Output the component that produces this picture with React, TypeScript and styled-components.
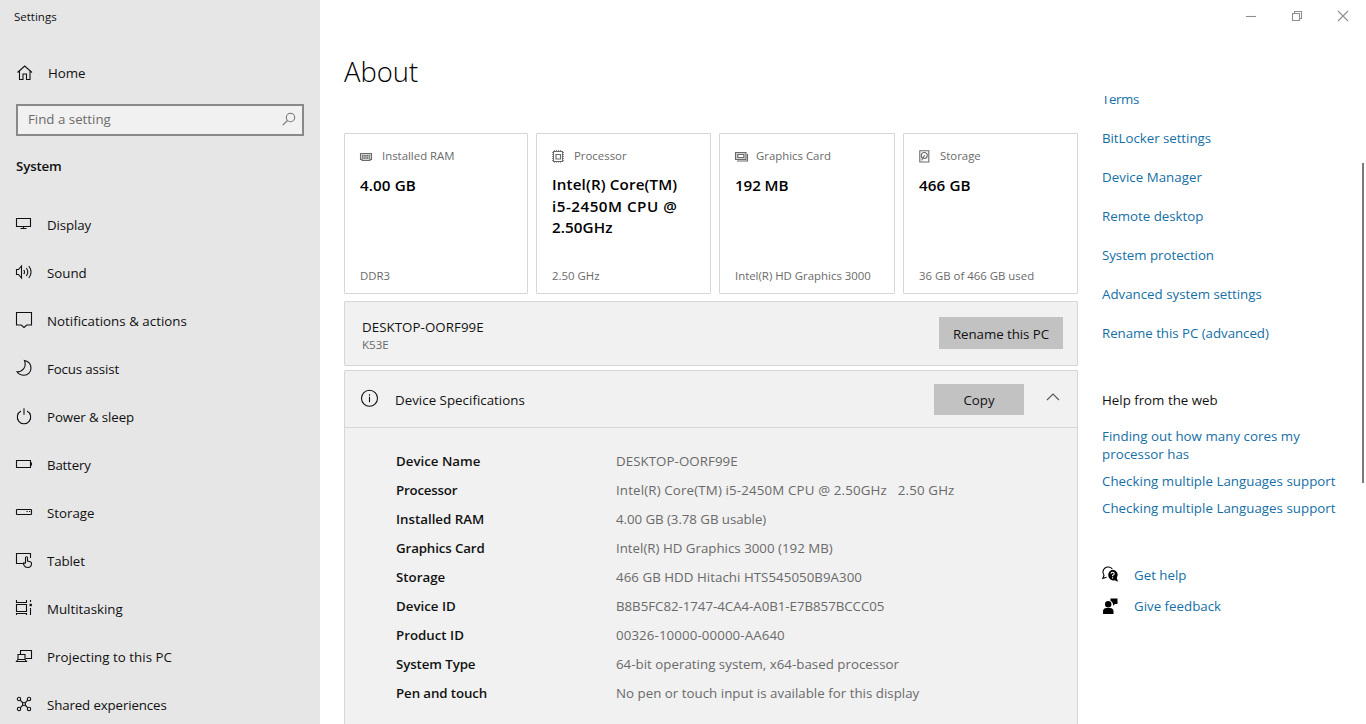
import React from "react";
import styled, { createGlobalStyle } from "styled-components";

const Global = createGlobalStyle`
  * { box-sizing: border-box; }
  html, body { margin: 0; padding: 0; overflow: hidden; background: #fff; }
  body { font-family: "Open Sans", "Noto Sans", sans-serif; font-size: 13.3px; line-height: 18px; color: #111; }
  svg { display: block; flex: none; overflow: visible; }
`;

const Window = styled.div`
  display: flex;
  width: 1366px;
  height: 724px;
  overflow: hidden;
  background: #fff;
`;

const Spaced = styled.span<{ $ls?: number }>`
  letter-spacing: ${(p) => p.$ls ?? 0}px;
  white-space: pre;
`;

const Sidebar = styled.aside`
  flex: none;
  width: 320px;
  height: 724px;
  background: #e6e6e6;
  display: flex;
  flex-direction: column;
  overflow: hidden;
`;

const WindowTitle = styled.div`
  flex: none;
  height: 32px;
  padding: 8px 0 0 14px;
  font-size: 11.5px;
  line-height: 17px;
`;

const HomeRow = styled.a`
  flex: none;
  display: flex;
  align-items: center;
  height: 48px;
  margin-top: 17px;
  padding-left: 16px;
  gap: 14px;
`;

const SearchBox = styled.div`
  flex: none;
  display: flex;
  align-items: center;
  justify-content: space-between;
  height: 32px;
  margin: 7px 16px 0;
  padding: 0 6px 2px 10px;
  border: 2px solid #898989;
  background: #f1f1f1;
  color: #6c6c6c;
`;

const SectionTitle = styled.h2`
  flex: none;
  margin: 21px 0 0 16px;
  font-size: 13.3px;
  line-height: 18px;
  font-weight: 600;
`;

const Nav = styled.nav`
  flex: none;
  display: flex;
  flex-direction: column;
  margin-top: 26px;
`;

const NavItem = styled.a`
  flex: none;
  display: flex;
  align-items: center;
  height: 48px;
  padding-left: 16px;
  gap: 13px;
  svg { margin-bottom: 2px; }
`;

const Page = styled.div`
  flex: 1;
  display: flex;
  flex-direction: column;
  height: 724px;
`;

const TitleBar = styled.div`
  flex: none;
  display: flex;
  justify-content: flex-end;
  height: 32px;
`;

const CaptionButton = styled.div`
  display: flex;
  align-items: center;
  justify-content: center;
  width: 46px;
  height: 32px;
  padding: 1px 0 0 1px;
  color: #8f8f8f;
`;

const Heading = styled.h1`
  flex: none;
  height: 64px;
  margin: 0;
  padding: 22px 0 0 24px;
  font-size: 27.4px;
  line-height: 36px;
  font-weight: 300;
  color: #000;
`;

const Body = styled.div`
  display: flex;
  flex: 1;
  min-height: 0;
  overflow: hidden;
`;

const Content = styled.main`
  flex: none;
  width: 734px;
  margin-left: 24px;
  padding-top: 37px;
`;

const Cards = styled.div`
  display: grid;
  grid-template-columns: 184px 175px 176px 175px;
  gap: 8px;
`;

const Card = styled.section`
  display: flex;
  flex-direction: column;
  height: 161px;
  padding: 14px 15px 8px;
  border: 1px solid #d6d6d6;
  border-radius: 1px;
`;

const CardLabel = styled.div<{ $gap?: number }>`
  display: flex;
  align-items: center;
  height: 16px;
  gap: ${(p) => p.$gap ?? 7}px;
  font-size: 11.4px;
  color: #6a6a6a;
`;

const CardValue = styled.div<{ $multi?: boolean }>`
  display: flex;
  flex-direction: column;
  margin-top: ${(p) => (p.$multi ? 10 : 11)}px;
  font-size: 15.2px;
  line-height: 21.5px;
  font-weight: 600;
  color: #000;
`;

const CardFoot = styled.div`
  margin-top: auto;
  font-size: 11.4px;
  line-height: 18px;
  color: #6a6a6a;
`;

const PcPanel = styled.section`
  display: flex;
  justify-content: space-between;
  height: 65px;
  margin-top: 7px;
  padding: 15px 14px 0 17px;
  border: 1px solid #d6d6d6;
  border-radius: 1px;
  background: #f1f1f1;
`;

const PcName = styled.div`
  padding-top: 1px;
  color: #111;
`;

const PcModel = styled.div`
  font-size: 11.6px;
  line-height: 17px;
  color: #6a6a6a;
`;

const Button = styled.button<{ $w: number; $h: number }>`
  width: ${(p) => p.$w}px;
  height: ${(p) => p.$h}px;
  padding: 2px 0 0;
  border: 0;
  background: #c2c2c2;
  font: inherit;
  color: #111;
  text-align: center;
`;

const Expander = styled.section`
  margin-top: 4px;
  height: 380px;
  border: 1px solid #d6d6d6;
  border-radius: 1px;
  background: #f1f1f1;
`;

const ExpanderHead = styled.div`
  display: flex;
  align-items: center;
  height: 57px;
  padding: 0 17px 0 16px;
  border-bottom: 1px solid #d6d6d6;
`;

const ExpanderTitle = styled.div`
  flex: 1;
  margin-left: 16px;
  padding-top: 2px;
`;

const Chevron = styled.div`
  margin: 0 0 4px 22px;
`;

const InfoMark = styled.div`
  padding-bottom: 2px;
`;

const SpecList = styled.dl`
  display: grid;
  grid-template-columns: 220px 1fr;
  grid-auto-rows: 29px;
  align-items: center;
  margin: 0;
  padding: 18px 0 0 51px;
  dt { font-weight: 600; }
  dd { margin: 0; color: #6a6a6a; }
`;

const Side = styled.aside`
  flex: none;
  width: 260px;
  margin-left: 24px;
  display: flex;
  flex-direction: column;
`;

const LinkColumn = styled.div`
  display: flex;
  flex-direction: column;
  margin-top: -17px;
`;

const Link = styled.a<{ $h?: number }>`
  display: flex;
  align-items: center;
  height: ${(p) => p.$h ?? 39}px;
  color: #156fa6;
`;

const SideTitle = styled.div`
  margin-top: 39px;
  color: #111;
`;

const WebLinks = styled.div`
  display: flex;
  flex-direction: column;
  gap: 9px;
  margin-top: 18px;
`;

const Support = styled.div`
  display: flex;
  flex-direction: column;
  margin-top: 42px;
`;

const SupportRow = styled.div`
  display: flex;
  align-items: center;
  height: 31px;
  gap: 14px;
`;

const ScrollThumb = styled.div`
  width: 2px;
  height: 320px;
  margin: 67px 2px 0 auto;
  background: #7a7a7a;
`;

type G = { children: React.ReactNode; size?: number; color?: string };
const Glyph = ({ children, size = 18, color = "#111" }: G) => (
  <svg width={size} height={size} viewBox={`0 0 ${size} ${size}`} fill="none" stroke={color} strokeWidth="1.1">
    {children}
  </svg>
);

const nav: { label: string; ls?: number; icon: React.ReactNode }[] = [
  { label: "Display", ls: -0.1, icon: <><path d="M.5 3.500h14v8H.5z" /><path d="M7.500 11.500v2M4.500 13.500h6" /></> },
  { label: "Sound", icon: <><path d="M.5 6.500h2L5.500 3v12L2.500 11.500H.5z" /><path d="M7.800 7q1.600 2 0 4M10.300 5q3 4 0 8M12.800 3q4.600 6 0 12" /></> },
  { label: "Notifications & actions", ls: 0.03, icon: <path d="M.5 1.500h15v12.500h-4.700L8 16.500 5.200 14H.5z" /> },
  { label: "Focus assist", ls: -0.14, icon: <path d="M8.500 1.500C13 2.500 15 5.500 15 9c0 4-3 7.200-7 7.200-3 0-5.500-1.300-7-3.500 5 .3 10-4.200 7.500-11.200z" /> },
  { label: "Power & sleep", ls: -0.12, icon: <><path d="M5 4.100a6.700 6.700 0 1 0 6 0" /><path d="M8 1.300v6.500" /></> },
  { label: "Battery", ls: -0.2, icon: <><path d="M.5 5.500h14v7H.5z" /><path d="M15.500 7.500v3" /></> },
  { label: "Storage", icon: <><rect x=".5" y="6.500" width="15" height="5" rx=".6" /><path d="M10.500 8.500h1.200M13 8.500h1.200" /></> },
  { label: "Tablet", ls: -0.1, icon: <><path d="M7 12.500H.5v-10h14v4.500" /><path d="M9.500 12V6.800q0-1.100 1-1.100t1 1.100V10l2.700.8q1.300.4 1.300 1.700 0 3.800-3.700 4-2.800 0-3.800-2.200L7.200 12.200q.8-1.200 2.300.8" /></> },
  { label: "Multitasking", icon: <><path d="M.5 1v2.500h10V1M.5 5.500h10v7H.5zM.5 16v-1.500h10V16M14.500 1v2M14.500 9v7" /><path d="M13.500 6h2.400" strokeWidth="2.400" /></> },
  { label: "Projecting to this PC", ls: 0.04, icon: <><path d="M4.500 7V3.500h11v8h-6" /><path d="M2 7.500h7v5H2zM.5 14.500h10L9 12.500H2z" /></> },
  { label: "Shared experiences", ls: -0.13, icon: <><circle cx="3" cy="4" r="1.700" /><circle cx="13" cy="4" r="1.700" /><circle cx="3" cy="14" r="1.700" /><circle cx="13" cy="14" r="1.700" /><circle cx="8" cy="9" r="1.500" /><path d="M4.200 5.200 7 8M11.800 5.200 9 8M4.200 12.800 7 10M11.800 12.800 9 10" /></> },
];

const grey = "#6a6a6a";
type CardData = { label: string; gap?: number; lines: [string, number][]; foot: string; icon: React.ReactNode };
const cards: CardData[] = [
  { label: "Installed RAM", lines: [["4.00 GB", 0.1]], foot: "DDR3", icon: <><path d="M.5 4.500h11v6h-1.500v1h-8v-1H.5z" fill="#d4d4d4" /><path d="M2 6.800h8M2 9h8" strokeDasharray="1.600 .6" strokeWidth="1.500" /></> },
  { label: "Processor", lines: [["Intel(R) Core(TM)", 0.14], ["i5-2450M CPU @", 0.5], ["2.50GHz", 0.1]], foot: "2.50 GHz", icon: <><path d="M1.500 2.500h9v10h-9zM4 5.500h4.500v4.500H4z" /><path d="M.5 3v9M11.500 3v9M2 1.500h8M2 13.200h8" strokeDasharray="1 1" strokeWidth=".8" /></> },
  { label: "Graphics Card", gap: 6, lines: [["192 MB", -0.1]], foot: "Intel(R) HD Graphics 3000", icon: <><path d="M.5 3.500h10.500v7H.5z" fill="#d4d4d4" /><path d="M2.800 5.500h6v3h-6z" fill="#fff" /><path d="M2 12h10.500V5" /></> },
  { label: "Storage", gap: 6, lines: [["466 GB", 0.12]], foot: "36 GB of 466 GB used", icon: <><path d="M.8 1.800h9v11.200h-9z" /><circle cx="5.300" cy="6.500" r="3" /><path d="M5.500 6.500 3 10.500v1M5.500 6.500h.5" /></> },
];

const specs: [string, string, number?, number?][] = [
  ["Device Name", "DESKTOP-OORF99E", 0, 0.06],
  ["Processor", "Intel(R) Core(TM) i5-2450M CPU @ 2.50GHz   2.50 GHz", -0.2, 0.155],
  ["Installed RAM", "4.00 GB (3.78 GB usable)", 0, -0.06],
  ["Graphics Card", "Intel(R) HD Graphics 3000 (192 MB)", -0.13],
  ["Storage", "466 GB HDD Hitachi HTS545050B9A300", 0, 0.04],
  ["Device ID", "B8B5FC82-1747-4CA4-A0B1-E7B857BCCC05", 0, -0.04],
  ["Product ID", "00326-10000-00000-AA640", 0, 0.1],
  ["System Type", "64-bit operating system, x64-based processor", -0.1, 0.02],
  ["Pen and touch", "No pen or touch input is available for this display", -0.1, 0.02],
];

const links: [string, number?][] = [
  ["Terms", -0.4],
  ["BitLocker settings", -0.04],
  ["Device Manager", 0.04],
  ["Remote desktop"],
  ["System protection", -0.04],
  ["Advanced system settings"],
  ["Rename this PC (advanced)", -0.04],
];

export default function App() {
  return (
    <Window>
      <Global />
      <Sidebar>
        <WindowTitle>Settings</WindowTitle>
        <HomeRow>
          <Glyph><path d="M1.500 8.500 8.700 2l7.300 6.500M3.500 7v8.500h3.500V10h3.500v5.500H14V7" /></Glyph>
          <Spaced>Home</Spaced>
        </HomeRow>
        <SearchBox>
          <Spaced>Find a setting</Spaced>
          <Glyph size={14} color="#777"><circle cx="8.500" cy="5.500" r="4.200" /><path d="M5.500 8.500.8 13.200" /></Glyph>
        </SearchBox>
        <SectionTitle><Spaced $ls={-0.15}>System</Spaced></SectionTitle>
        <Nav>
          {nav.map((n) => (
            <NavItem key={n.label}>
              <Glyph>{n.icon}</Glyph>
              <Spaced $ls={n.ls}>{n.label}</Spaced>
            </NavItem>
          ))}
        </Nav>
      </Sidebar>
      <Page>
        <TitleBar>
          <CaptionButton><Glyph size={11} color="currentColor"><path d="M0 5.500h10" /></Glyph></CaptionButton>
          <CaptionButton><Glyph size={11} color="currentColor"><path d="M.5 2.500h7v7h-7zM2.500 2.500v-2h7v7h-2" /></Glyph></CaptionButton>
          <CaptionButton><Glyph size={11} color="currentColor"><path d="m0 0 10 10M10 0 0 10" /></Glyph></CaptionButton>
        </TitleBar>
        <Heading>About</Heading>
        <Body>
          <Content>
            <Cards>
              {cards.map((c) => (
                <Card key={c.label}>
                  <CardLabel $gap={c.gap}><Glyph size={15} color={grey}>{c.icon}</Glyph><Spaced>{c.label}</Spaced></CardLabel>
                  <CardValue $multi={c.lines.length > 1}>
                    {c.lines.map(([text, ls]) => <Spaced key={text} $ls={ls}>{text}</Spaced>)}
                  </CardValue>
                  <CardFoot><Spaced>{c.foot}</Spaced></CardFoot>
                </Card>
              ))}
            </Cards>
            <PcPanel>
              <div>
                <PcName><Spaced $ls={0.06}>DESKTOP-OORF99E</Spaced></PcName>
                <PcModel>K53E</PcModel>
              </div>
              <Button $w={124} $h={32}><Spaced $ls={-0.05}>Rename this PC</Spaced></Button>
            </PcPanel>
            <Expander>
              <ExpanderHead>
                <InfoMark>
                  <Glyph color="#111"><circle cx="8.500" cy="9.300" r="8" /><path d="M8.500 7.800v5.500M8.500 5.300v1.400" /></Glyph>
                </InfoMark>
                <ExpanderTitle><Spaced $ls={0.03}>Device Specifications</Spaced></ExpanderTitle>
                <Button $w={90} $h={31}>Copy</Button>
                <Chevron><Glyph size={14} color="#555"><path d="m1 10 6-6 6 6" /></Glyph></Chevron>
              </ExpanderHead>
              <SpecList>
                {specs.map(([k, v, kls, vls]) => (
                  <React.Fragment key={k}>
                    <dt><Spaced $ls={kls}>{k}</Spaced></dt>
                    <dd><Spaced $ls={vls}>{v}</Spaced></dd>
                  </React.Fragment>
                ))}
              </SpecList>
            </Expander>
          </Content>
          <Side>
            <LinkColumn>
              {links.map(([l, ls]) => <Link key={l}><Spaced $ls={ls}>{l}</Spaced></Link>)}
            </LinkColumn>
            <SideTitle>Help from the web</SideTitle>
            <WebLinks>
              <Link $h={36}><Spaced $ls={0.03}>{"Finding out how many cores my\nprocessor has"}</Spaced></Link>
              <Link $h={18}><Spaced $ls={0.03}>Checking multiple Languages support</Spaced></Link>
              <Link $h={18}><Spaced $ls={0.03}>Checking multiple Languages support</Spaced></Link>
            </WebLinks>
            <Support>
              <SupportRow>
                <Glyph color="#000">
                  <path d="M10.300 3A5.200 5.200 0 1 0 2 9.300L.8 12.300l3.700-1.100" />
                  <path d="M10.500 3.800a5.200 5.200 0 0 1 4.300 8.200l1.200 3.700-3.400-1.400a5.300 5.300 0 1 1-2.100-10.500z" fill="#000" stroke="none" />
                  <path d="M9 7.600q.1-1.400 1.600-1.400t1.600 1.400-1.600 1.700v1M10.600 11.300v1.200" stroke="#fff" />
                </Glyph>
                <Link $h={31}>Get help</Link>
              </SupportRow>
              <SupportRow>
                <Glyph color="none">
                  <path d="M1 17v-2.500Q1 11 4.500 11H8q3.500 0 3.500 3.500V17zM8.500 1.500h7V7H13l-2 1.700V7q-.5-2.500-2.500-3.300z" fill="#000" />
                  <circle cx="6.200" cy="7.200" r="3.200" fill="#000" />
                </Glyph>
                <Link $h={31}>Give feedback</Link>
              </SupportRow>
            </Support>
          </Side>
          <ScrollThumb />
        </Body>
      </Page>
    </Window>
  );
}
